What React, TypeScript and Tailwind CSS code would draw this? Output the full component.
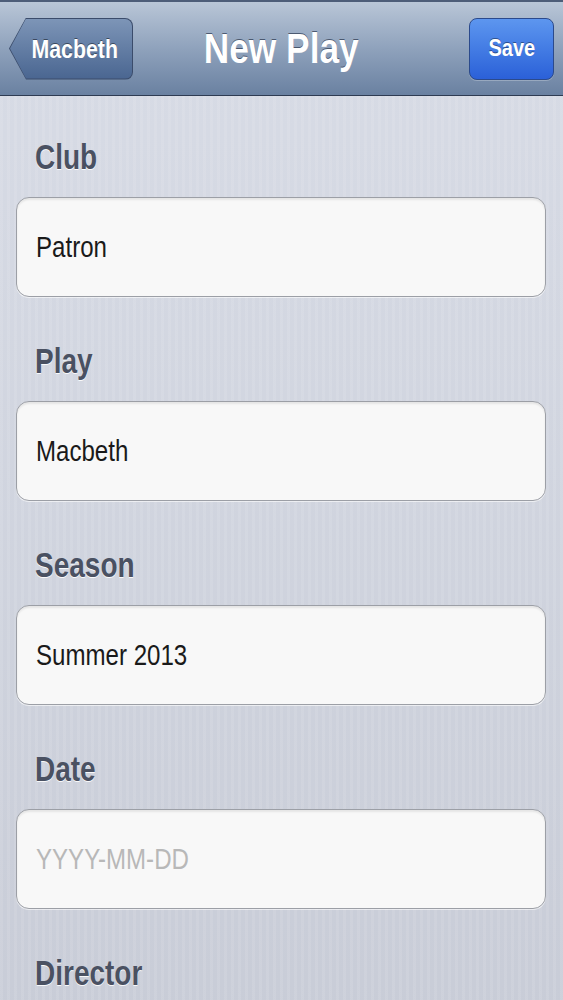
import React from "react";

const fields = [
  { label: "Club", value: "Patron" },
  { label: "Play", value: "Macbeth" },
  { label: "Season", value: "Summer 2013" },
  { label: "Date", value: "", placeholder: "YYYY-MM-DD" },
  { label: "Director", value: "" },
];

function NavBar() {
  return (
    <div className="border-t-2 border-[#4d5d78] border-b border-b-[#2e3b52] bg-gradient-to-b from-[#b9c6d7] via-[#8fa2bc] to-[#6a81a1] h-[96px] grid grid-cols-[1fr_auto_1fr] items-center pl-[9px] pr-[9px]">
      {/* back button */}
      <div className="w-[124px] h-[62px] bg-[#3b4c6b] p-[1px] rounded-r-lg [clip-path:polygon(17px_0,100%_0,100%_100%,17px_100%,0_50%)]">
        <div className="w-full h-full rounded-r-[7px] bg-gradient-to-b from-[#7d95b7] to-[#4a6691] [clip-path:polygon(16px_0,100%_0,100%_100%,16px_100%,0_50%)] flex items-center justify-center pl-[8px]">
          <span className="inline-block scale-x-[0.82] text-white font-bold text-[26px] leading-none [text-shadow:0_-1px_0_rgba(0,0,0,0.45)]">
            Macbeth
          </span>
        </div>
      </div>

      <span className="inline-block scale-x-[0.84] text-white font-bold text-[42px] leading-none [text-shadow:0_-1px_0_rgba(40,52,75,0.7)]">
        New Play
      </span>

      <div className="justify-self-end w-[85px] h-[62px] rounded-lg border border-[#2b4a8c] bg-gradient-to-b from-[#5d96ef] to-[#2b60d8] flex items-center justify-center shadow-[0_1px_0_rgba(255,255,255,0.25)]">
        <span className="inline-block scale-x-[0.87] text-white font-bold text-[23px] leading-none [text-shadow:0_-1px_0_rgba(0,0,0,0.4)]">
          Save
        </span>
      </div>
    </div>
  );
}

function Field({ label, value, placeholder }: { label: string; value: string; placeholder?: string }) {
  return (
    <div className="flex flex-col">
      <div className="h-[40px] leading-[40px] pl-[19px] mb-5">
        <span className="inline-block origin-left scale-x-[0.8] text-[35px] font-bold text-[#4a5162] [text-shadow:0_1px_0_rgba(255,255,255,0.9)]">
          {label}
        </span>
      </div>
      <div className="h-[100px] rounded-[13px] border border-[#9c9fa6] bg-[#f8f8f8] shadow-[inset_0_2px_2px_rgba(0,0,0,0.08),0_1px_0_rgba(255,255,255,0.6)] pl-[19px] leading-[98px] text-[29px]">
        {value ? (
          <span className="inline-block origin-left scale-x-[0.83] text-[#1a1a1a]">{value}</span>
        ) : placeholder ? (
          <span className="inline-block origin-left scale-x-[0.83] text-[#b8b8b8]">{placeholder}</span>
        ) : null}
      </div>
    </div>
  );
}

export default function App() {
  return (
    <div
      className="min-h-screen w-full [font-family:'Liberation_Sans',Arial,sans-serif] [background-image:repeating-linear-gradient(90deg,rgba(255,255,255,0.09)_0_3px,transparent_3px_7px),linear-gradient(#d8dce6,#c7cbd6)]"
    >
      <NavBar />
      <div className="pl-4 pr-[17px] pt-[41px] flex flex-col gap-[44px]">
        {fields.map((f) => (
          <Field key={f.label} label={f.label} value={f.value} placeholder={f.placeholder} />
        ))}
      </div>
    </div>
  );
}
